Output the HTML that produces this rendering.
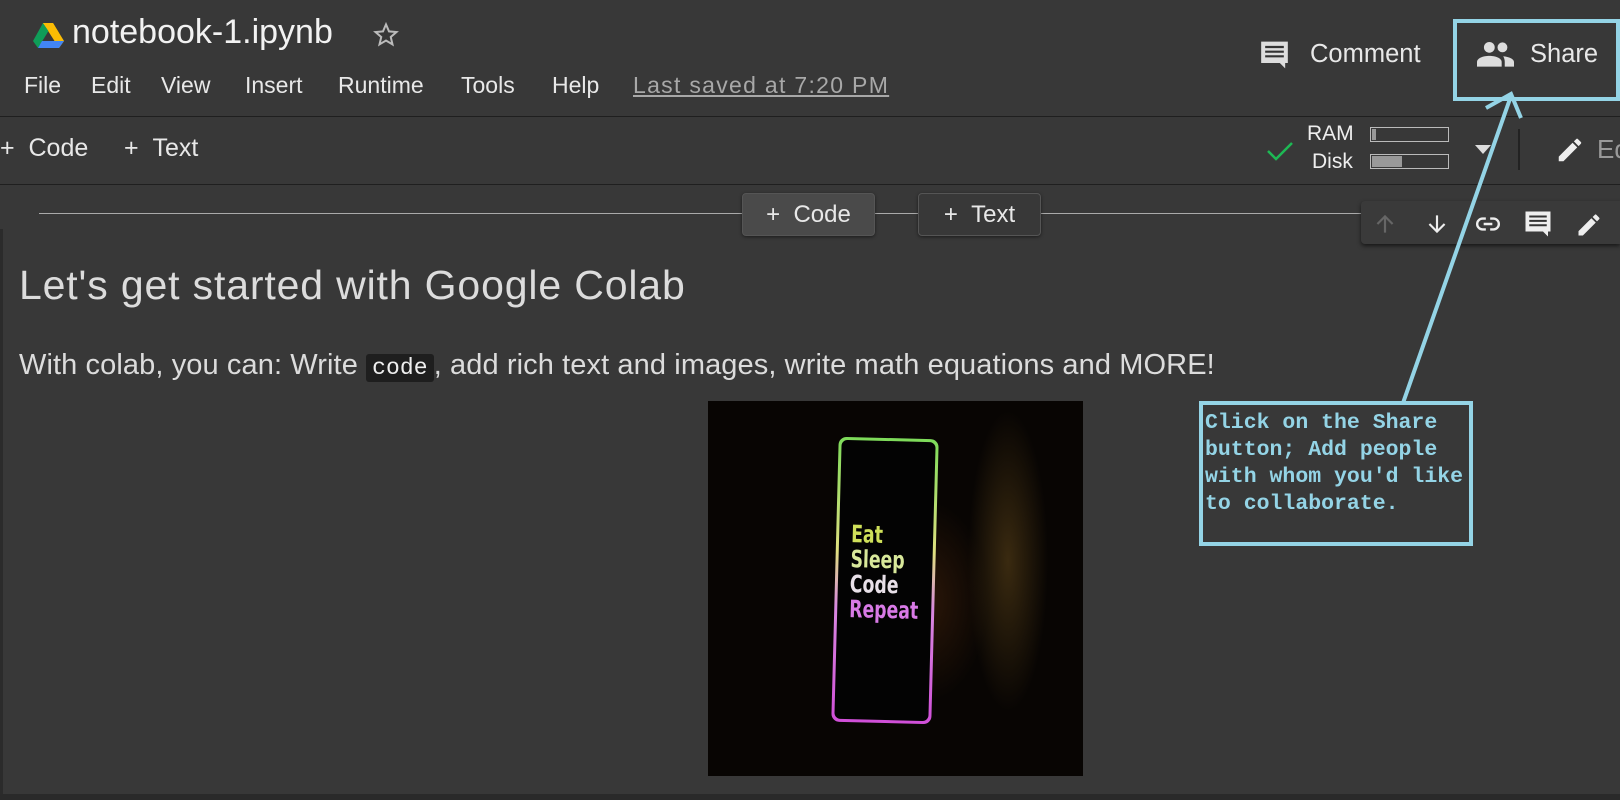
<!DOCTYPE html>
<html><head><meta charset="utf-8"><style>
*{margin:0;padding:0;box-sizing:border-box}
body{width:1620px;height:800px;background:#2b2b2b;font-family:"Liberation Sans",sans-serif;color:#e3e3e3;position:relative;overflow:hidden}
.a{position:absolute;white-space:nowrap}
.top{position:absolute;left:0;top:0;width:1620px;height:229px;background:#383838}
.hl{position:absolute;left:0;width:1620px;height:1px;background:#1f1f1f}
.menu{font-size:23px;color:#e8e8e8;top:72px}
.btn{position:absolute;border:1px solid #555;border-radius:4px;font-size:24px;color:#e8e8e8;display:flex;align-items:center;justify-content:center;box-shadow:0 1px 3px rgba(0,0,0,.5)}
</style></head><body>
<div class="top"></div>
<div class="a" style="left:3px;top:229px;width:1617px;height:565px;background:#383838"></div>
<div class="a" style="left:0;top:794px;width:1620px;height:6px;background:#2a2a2a"></div>

<svg class="a" style="left:33px;top:23px" width="31" height="25" viewBox="0 0 31 25"><polygon points="10,0 20,0 31,18 26,25" fill="#fbbc04" /><polygon points="10,0 0,18 5,25 15.5,8" fill="#0f9d58"/><polygon points="5,25 26,25 31,18 9,18" fill="#4285f4"/><polygon points="10,0 20,0 26,10 15.5,8" fill="#fbbc04"/></svg>
<div class="a" style="left:72px;top:13px;font-size:34px;color:#f2f2f2">notebook-1.ipynb</div>
<svg class="a" style="left:371px;top:20px" width="30" height="30" viewBox="0 0 24 24"><path d="M12 3.5l2.4 5.6 6 .5-4.6 4 1.4 5.9L12 16.4 6.8 19.5l1.4-5.9-4.6-4 6-.5z" fill="none" stroke="#bbb" stroke-width="1.6"/></svg>
<div class="a menu" style="left:24px">File</div>
<div class="a menu" style="left:91px">Edit</div>
<div class="a menu" style="left:161px">View</div>
<div class="a menu" style="left:245px">Insert</div>
<div class="a menu" style="left:338px">Runtime</div>
<div class="a menu" style="left:461px">Tools</div>
<div class="a menu" style="left:552px">Help</div>
<div class="a menu" style="left:633px;color:#a8a8a8;text-decoration:underline;letter-spacing:1.3px">Last saved at 7:20 PM</div>

<svg class="a" style="left:1258px;top:39px" width="33" height="32" viewBox="0 0 24 24"><path d="M2 2h20v16h-2v4l-4-4H2z" fill="#ddd"/><path d="M5 6h14M5 9.5h14M5 13h14" stroke="#333" stroke-width="1.6"/></svg>
<div class="a" style="left:1310px;top:40px;font-size:25.5px;color:#e8e8e8">Comment</div>
<div class="a" style="left:1453px;top:19px;width:167px;height:82px;border:4px solid #94d4e6"></div>
<svg class="a" style="left:1477px;top:40px" width="37" height="27" viewBox="0 0 24 17"><circle cx="8" cy="4.5" r="3.5" fill="#ddd"/><circle cx="16.5" cy="4.5" r="3.2" fill="#ddd"/><path d="M0 17v-3c0-2.5 4-4 8-4s8 1.5 8 4v3z" fill="#ddd"/><path d="M17 10.3c3 .3 7 1.5 7 3.7v3h-6v-3c0-1.5-.4-2.6-1-3.7z" fill="#ddd"/></svg>
<div class="a" style="left:1530px;top:40px;font-size:25.5px;color:#e8e8e8">Share</div>

<div class="hl" style="top:116px"></div>
<div class="a" style="left:0;top:134px;font-size:25px;color:#e8e8e8">+&nbsp;&nbsp;Code</div>
<div class="a" style="left:124px;top:134px;font-size:25px;color:#e8e8e8">+&nbsp;&nbsp;Text</div>
<svg class="a" style="left:1266px;top:140px" width="28" height="22" viewBox="0 0 28 22"><path d="M2 11l8 8L26 3" fill="none" stroke="#1db954" stroke-width="2.5"/></svg>
<div class="a" style="left:1307px;top:122px;font-size:21px;color:#eee">RAM</div>
<div class="a" style="left:1312px;top:150px;font-size:21px;color:#eee">Disk</div>
<div class="a" style="left:1370px;top:127px;width:79px;height:15px;border:1px solid #bbb"><div style="margin:1px;width:4px;height:11px;background:#999"></div></div>
<div class="a" style="left:1370px;top:154px;width:79px;height:15px;border:1px solid #bbb"><div style="margin:1px;width:30px;height:11px;background:#999"></div></div>
<svg class="a" style="left:1475px;top:145px" width="16" height="9"><polygon points="0,0 16,0 8,9" fill="#ddd"/></svg>
<div class="a" style="left:1518px;top:129px;width:2px;height:41px;background:#222"></div>
<svg class="a" style="left:1555px;top:135px" width="30" height="30" viewBox="0 0 24 24"><path d="M3 17.25V21h3.75L17.8 9.94l-3.75-3.75zM20.7 7.04a1 1 0 000-1.41l-2.34-2.34a1 1 0 00-1.41 0l-1.83 1.83 3.75 3.75z" fill="#eee"/></svg>
<div class="a" style="left:1597px;top:134px;font-size:26px;color:#999">Ed</div>
<div class="hl" style="top:184px"></div>

<div class="a" style="left:39px;top:213px;width:1322px;height:1px;background:#aaa"></div>
<div class="btn" style="left:742px;top:193px;width:133px;height:43px;background:#4a4a4a">+&nbsp;&nbsp;Code</div>
<div class="btn" style="left:918px;top:193px;width:123px;height:43px;background:#383838">+&nbsp;&nbsp;Text</div>
<div class="a" style="left:1361px;top:201px;width:259px;height:43px;background:#3a3a3a;border-radius:4px 0 0 4px;box-shadow:0 2px 4px rgba(0,0,0,.6)"></div>
<svg class="a" style="left:1372px;top:211px" width="26" height="26" viewBox="0 0 24 24"><path d="M12 20V5M5 12l7-7 7 7" fill="none" stroke="#666" stroke-width="2"/></svg>
<svg class="a" style="left:1424px;top:211px" width="26" height="26" viewBox="0 0 24 24"><path d="M12 4v15M5 12l7 7 7-7" fill="none" stroke="#eee" stroke-width="2"/></svg>
<svg class="a" style="left:1474px;top:211px" width="28" height="26" viewBox="0 0 24 24"><path d="M10 7H7a5 5 0 000 10h3M14 7h3a5 5 0 010 10h-3M8 12h8" fill="none" stroke="#eee" stroke-width="2.2"/></svg>
<svg class="a" style="left:1523px;top:209px" width="30" height="30" viewBox="0 0 24 24"><path d="M2 2h20v16h-2v4l-4-4H2z" fill="#eee"/><path d="M5 6h14M5 9.5h14M5 13h14" stroke="#333" stroke-width="1.6"/></svg>
<svg class="a" style="left:1575px;top:211px" width="28" height="28" viewBox="0 0 24 24"><path d="M3 17.25V21h3.75L17.8 9.94l-3.75-3.75zM20.7 7.04a1 1 0 000-1.41l-2.34-2.34a1 1 0 00-1.41 0l-1.83 1.83 3.75 3.75z" fill="#eee"/></svg>

<div class="a" style="left:19px;top:262px;font-size:41px;letter-spacing:.85px;color:#dcdcdc">Let's get started with Google Colab</div>
<div class="a" style="left:19px;top:349px;font-size:29px;letter-spacing:.1px;color:#dcdcdc">With colab, you can: Write <span style="font-family:'Liberation Mono',monospace;background:#1e1e1e;padding:1px 6px;border-radius:3px;font-size:23px;color:#eee">code</span>, add rich text and images, write math equations and MORE!</div>

<div class="a" style="left:708px;top:401px;width:375px;height:375px;background:radial-gradient(ellipse 40px 150px at 300px 160px,#3a2a10,transparent),radial-gradient(ellipse 60px 100px at 220px 200px,#2a1608,transparent),#080503;overflow:hidden">
 <div class="a" style="left:127px;top:37px;width:100px;height:285px;border-radius:8px;padding:3px;transform:rotate(1.5deg);background:linear-gradient(#7ddb5a,#e0e080 40%,#d888e0 60%,#d04fd8)">
  <div style="width:100%;height:100%;background:#030303;border-radius:6px;position:relative">
   <div style="position:absolute;left:12px;top:82px;font-size:24px;line-height:25px;font-weight:bold;font-family:'DejaVu Sans',sans-serif;transform:scaleX(.72);transform-origin:left">
    <div style="color:#cfe05a">Eat</div><div style="color:#d8e89a">Sleep</div><div style="color:#e8e0e8">Code</div><div style="color:#d87ae6">Repeat</div>
   </div>
  </div>
 </div>
</div>

<svg class="a" style="left:0;top:0" width="1620" height="800"><line x1="1403" y1="403" x2="1511" y2="96" stroke="#94d4e6" stroke-width="4"/><path d="M1486 108L1511 94 1521 118" fill="none" stroke="#94d4e6" stroke-width="4"/></svg>
<div class="a" style="left:1199px;top:401px;width:274px;height:145px;border:4px solid #94d4e6;background:#383838;padding:5px 2px;font-family:'Liberation Mono',monospace;font-weight:bold;font-size:21.5px;line-height:27px;color:#94d4e6;white-space:pre">Click on the Share
button; Add people
with whom you'd like
to collaborate.</div>
</body></html>
